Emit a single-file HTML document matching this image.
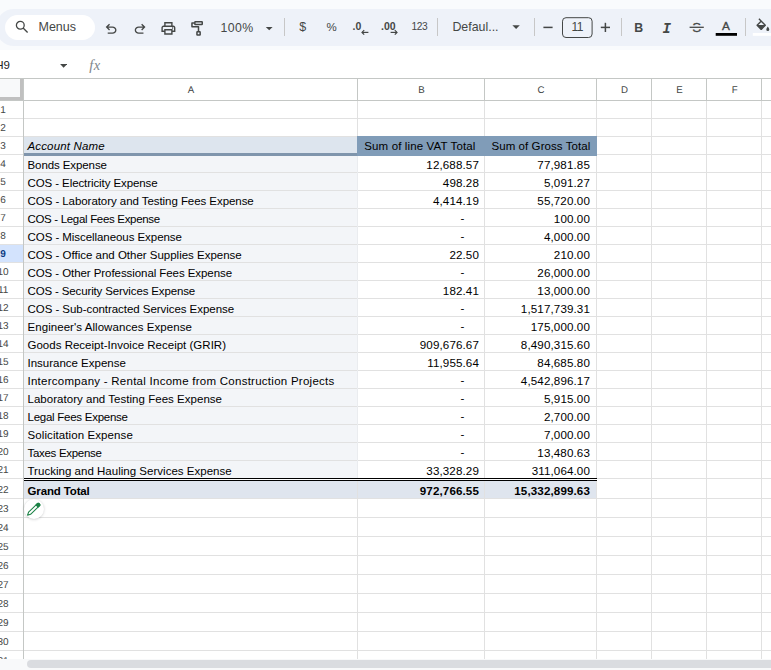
<!DOCTYPE html>
<html lang="en"><head><meta charset="utf-8"><title>Sheet</title>
<style>
html,body{margin:0;padding:0}
body{width:771px;height:670px;overflow:hidden;position:relative;background:#fff;font-family:"Liberation Sans",sans-serif;color:#000}
.abs,.abs *{position:absolute}
#page{position:absolute;left:0;top:0;width:771px;height:670px;overflow:hidden}
#page div,#page span,#page svg{position:absolute}
.hl{left:0;width:771px;height:1px;background:#e1e1e1}
.vl{top:101px;width:1px;height:558px;background:#e1e1e1}
.rh{left:-17.4px;width:41px;text-align:center;font-size:10px;margin-top:1.1px;text-rendering:geometricPrecision;color:#444746;line-height:12px;height:12px}
.ch{top:85.2px;margin-left:0.6px;height:12px;line-height:12px;font-size:9.7px;text-rendering:geometricPrecision;color:#444746;text-align:center}
.ca{left:27.5px;font-size:11.5px;letter-spacing:-0.08px;line-height:14px;height:14px;white-space:nowrap;color:#000}
.nb{font-size:11.6px;letter-spacing:0.12px;line-height:14px;height:14px;white-space:nowrap;text-align:right;color:#000}
.tb{font-size:12.5px;color:#444746;line-height:16px;height:16px;white-space:nowrap}
.sep{top:18px;width:1px;height:18px;background:#c7c7c7}
</style></head><body><div id="page">

<div style="left:0;top:0;width:771px;height:50px;background:#f9fbfd"></div>
<div style="left:-4px;top:9px;width:800px;height:37px;background:#eef2f9;border-radius:18px"></div>
<div style="left:5px;top:15px;width:90px;height:25px;background:#fff;border-radius:12.5px"></div>
<div style="left:0;top:50px;width:771px;height:28px;background:#fff"></div>
<svg style="left:13px;top:19px" width="18" height="18" viewBox="0 0 18 18"><circle cx="7.3" cy="6.3" r="3.9" fill="none" stroke="#444746" stroke-width="1.3"/><path d="M10.1 9.1 L14.6 13.6" stroke="#444746" stroke-width="1.4" stroke-linecap="butt"/></svg>
<div class="tb" style="left:38.5px;top:19px">Menus</div>
<svg style="left:102.7px;top:20.5px" width="16.2" height="16.2" viewBox="0 -960 960 960"><path fill="#444746" d="M280-200v-80h284q63 0 109.500-40T720-420q0-60-46.500-100T564-560H312l104 104-56 56-200-200 200-200 56 56-104 104h252q97 0 166.500 63T800-420q0 94-69.500 157T564-200H280Z"/></svg>
<svg style="left:132.1px;top:20.5px" width="16.2" height="16.2" viewBox="0 -960 960 960"><path fill="#444746" d="M396-200q-97 0-166.500-63T160-420q0-94 69.500-157T396-640h252L544-744l56-56 200 200-200 200-56-56 104-104H396q-63 0-109.500 40T240-420q0 60 46.500 100T396-280h284v80H396Z"/></svg>
<svg style="left:160.0px;top:19.8px" width="16.8" height="16.8" viewBox="0 -960 960 960"><path fill="#444746" d="M640-640v-120H320v120h-80v-200h480v200h-80Zm-480 80h640-640Zm560 100q17 0 28.500-11.500T760-500q0-17-11.500-28.500T720-540q-17 0-28.500 11.500T680-500q0 17 11.500 28.500T720-460Zm-80 260v-160H320v160h320Zm80 80H240v-160H80v-240q0-51 35-85.500t85-34.500h560q51 0 85.500 34.500T880-520v240H720v160Zm80-240v-160q0-17-11.500-28.500T760-560H200q-17 0-28.500 11.500T160-520v160h80v-80h480v80h80Z"/></svg>
<svg style="left:0;top:0" width="771" height="50" viewBox="0 0 771 50"><g fill="none" stroke="#444746" stroke-width="1.5" stroke-linejoin="round"><rect x="194.85" y="21.75" width="7.4" height="2.7" rx="0.5"/><path d="M194.85 23.1 H191.95 V26.75 H198.5 V31.6"/><rect x="196.95" y="31.85" width="3.2" height="3.2" rx="0.4"/></g><path d="M265.8 26.9 H272.6 L269.2 30.3 Z" fill="#444746"/><path d="M512.4 25.3 H519.8 L516.1 29 Z" fill="#444746"/><g fill="none" stroke="#444746" stroke-width="1.2"><path d="M368.4 32.4 H362"/><path d="M364.2 30.2 L362 32.4 L364.2 34.6"/><path d="M390.6 32.4 H397"/><path d="M394.8 30.2 L397 32.4 L394.8 34.6"/></g><g fill="none" stroke="#444746" stroke-width="1.5"><path d="M543.4 27.4 H552.6"/><path d="M600.8 27.4 H610"/><path d="M605.4 22.8 V32"/></g><rect x="562.5" y="17.7" width="29.6" height="19.8" rx="3.5" fill="none" stroke="#444746" stroke-width="1"/><rect x="715.7" y="33" width="21.3" height="2.8" fill="#000"/><rect x="752.8" y="33" width="20" height="2.8" fill="#fff"/><g fill="none" stroke="#444746" stroke-width="1.35" stroke-linejoin="round"><path d="M758.9 18.8 L765.3 25.3 L761.2 29.4 L757.1 25.3 L761.1 21.3"/></g><path d="M757 25.1 H765.4 L761.2 29.4 Z" fill="#444746"/><path d="M767.8 26.6 q1.5 2 1.5 2.9 a1.5 1.5 0 0 1 -3 0 q0 -0.9 1.5 -2.9Z" fill="#444746"/></svg>
<div class="sep" style="left:284px"></div>
<div class="sep" style="left:437px"></div>
<div class="sep" style="left:533.5px"></div>
<div class="sep" style="left:621px"></div>
<div class="sep" style="left:745px"></div>
<div class="tb" style="left:220.5px;top:19.5px;font-size:12.3px;letter-spacing:0.4px">100%</div>
<div class="tb" style="left:299.3px;top:19px;font-size:12.5px">$</div>
<div class="tb" style="left:326.5px;top:19px;font-size:11.5px">%</div>
<div class="tb" style="left:352.5px;top:17.5px;font-size:10.5px;font-weight:bold">.0</div>
<div class="tb" style="left:381px;top:17.5px;font-size:10.5px;font-weight:bold">.00</div>
<div class="tb" style="left:411.4px;top:19.2px;font-size:10.2px;letter-spacing:-0.3px">123</div>
<div class="tb" style="left:452.4px;top:18.8px;font-size:12.4px">Defaul...</div>
<div class="tb" style="left:562.5px;width:29.6px;text-align:center;top:19.4px;font-size:12px;letter-spacing:-0.4px">11</div>
<div class="tb" style="left:634.2px;top:20.2px;font-size:12.3px;font-weight:bold">B</div>
<div class="tb" style="left:662.6px;top:20.6px;font-size:14px;font-weight:bold;font-style:italic;font-family:'Liberation Mono',monospace">I</div>
<div class="tb" style="left:692.2px;top:19.6px;font-size:13.4px;-webkit-text-stroke:0.3px #444746">S</div>
<svg style="left:686px;top:20px" width="22" height="14" viewBox="686 20 22 14"><rect x="689" y="25.3" width="15.4" height="3.9" fill="#eef2f9"/><path d="M689.6 27.3 H703.8" stroke="#444746" stroke-width="1.3"/></svg>
<div class="tb" style="left:722.1px;top:17.9px;font-size:11.8px;-webkit-text-stroke:0.35px #444746">A</div>
<div style="left:-4.8px;top:58px;font-size:11.5px;line-height:14px;color:#202124;white-space:nowrap">H9</div>
<svg style="left:60.3px;top:63.6px" width="7.2" height="4" viewBox="0 0 7.2 4"><path d="M0.1 0.1 H7.1 L3.6 3.7 Z" fill="#444746"/></svg>
<div style="left:89.3px;top:56.3px;font-size:14.5px;line-height:18px;font-style:italic;font-family:'Liberation Serif',serif;color:#80868b;white-space:nowrap;letter-spacing:0.4px">fx</div>
<div style="left:24px;top:137px;width:333px;height:16px;background:#dde5ee"></div>
<div style="left:357px;top:136px;width:240px;height:20px;background:#809cb8"></div>
<div style="left:24px;top:155px;width:333px;height:323px;background:#f3f5f8"></div>
<div style="left:24px;top:481px;width:573px;height:17px;background:#dfe5ee"></div>
<div style="left:0;top:245px;width:23px;height:17px;background:#d3e3fd"></div>
<div class="hl" style="top:118px"></div>
<div class="hl" style="top:136px"></div>
<div class="hl" style="top:154px"></div>
<div class="hl" style="top:172px"></div>
<div class="hl" style="top:190px"></div>
<div class="hl" style="top:208px"></div>
<div class="hl" style="top:226px"></div>
<div class="hl" style="top:244px"></div>
<div class="hl" style="top:262px"></div>
<div class="hl" style="top:280px"></div>
<div class="hl" style="top:298px"></div>
<div class="hl" style="top:316px"></div>
<div class="hl" style="top:334px"></div>
<div class="hl" style="top:352px"></div>
<div class="hl" style="top:370px"></div>
<div class="hl" style="top:388px"></div>
<div class="hl" style="top:406px"></div>
<div class="hl" style="top:424px"></div>
<div class="hl" style="top:442px"></div>
<div class="hl" style="top:460px"></div>
<div class="hl" style="top:478px"></div>
<div class="hl" style="top:498px"></div>
<div class="hl" style="top:517px"></div>
<div class="hl" style="top:536px"></div>
<div class="hl" style="top:555px"></div>
<div class="hl" style="top:574px"></div>
<div class="hl" style="top:593px"></div>
<div class="hl" style="top:612px"></div>
<div class="hl" style="top:631px"></div>
<div class="hl" style="top:650px"></div>
<div class="vl" style="left:23px"></div>
<div class="vl" style="left:357px"></div>
<div class="vl" style="left:484px"></div>
<div class="vl" style="left:596px"></div>
<div class="vl" style="left:651px"></div>
<div class="vl" style="left:706px"></div>
<div class="vl" style="left:761px"></div>
<div style="left:357px;top:136px;width:240px;height:20px;background:#809cb8"></div>
<div style="left:357px;top:156px;width:1px;height:322px;background:#eaecef"></div>
<div style="left:0;top:78px;width:771px;height:1px;background:#c4c7c5"></div>
<div style="left:0;top:100px;width:771px;height:1px;background:#c4c7c5"></div>
<div style="left:23px;top:79px;width:1px;height:21px;background:#c4c7c5"></div>
<div style="left:357px;top:79px;width:1px;height:21px;background:#c4c7c5"></div>
<div style="left:484px;top:79px;width:1px;height:21px;background:#c4c7c5"></div>
<div style="left:596px;top:79px;width:1px;height:21px;background:#c4c7c5"></div>
<div style="left:651px;top:79px;width:1px;height:21px;background:#c4c7c5"></div>
<div style="left:706px;top:79px;width:1px;height:21px;background:#c4c7c5"></div>
<div style="left:761px;top:79px;width:1px;height:21px;background:#c4c7c5"></div>
<div style="left:23px;top:101px;width:1px;height:558px;background:#c4c7c5"></div>
<div style="left:0;top:79px;width:20px;height:18px;background:#f8f9fa"></div>
<div style="left:20px;top:79px;width:3px;height:21px;background:#c0c0c0"></div>
<div style="left:0;top:97px;width:23px;height:3px;background:#c0c0c0"></div>
<div class="ch" style="left:24px;width:333px">A</div>
<div class="ch" style="left:358px;width:126px">B</div>
<div class="ch" style="left:485px;width:111px">C</div>
<div class="ch" style="left:597px;width:54px">D</div>
<div class="ch" style="left:652px;width:54px">E</div>
<div class="ch" style="left:707px;width:54px">F</div>
<div class="rh" style="top:104px">1</div>
<div class="rh" style="top:122px">2</div>
<div class="rh" style="top:140px">3</div>
<div class="rh" style="top:158px">4</div>
<div class="rh" style="top:176px">5</div>
<div class="rh" style="top:194px">6</div>
<div class="rh" style="top:212px">7</div>
<div class="rh" style="top:230px">8</div>
<div class="rh" style="top:248px;font-weight:bold;color:#0b3a82">9</div>
<div class="rh" style="top:266px">10</div>
<div class="rh" style="top:284px">11</div>
<div class="rh" style="top:302px">12</div>
<div class="rh" style="top:320px">13</div>
<div class="rh" style="top:338px">14</div>
<div class="rh" style="top:356px">15</div>
<div class="rh" style="top:374px">16</div>
<div class="rh" style="top:392px">17</div>
<div class="rh" style="top:410px">18</div>
<div class="rh" style="top:428px">19</div>
<div class="rh" style="top:446px">20</div>
<div class="rh" style="top:464px">21</div>
<div class="rh" style="top:484px">22</div>
<div class="rh" style="top:503px">23</div>
<div class="rh" style="top:522px">24</div>
<div class="rh" style="top:541px">25</div>
<div class="rh" style="top:560px">26</div>
<div class="rh" style="top:579px">27</div>
<div class="rh" style="top:598px">28</div>
<div class="rh" style="top:617px">29</div>
<div class="rh" style="top:636px">30</div>
<div class="rh" style="top:655px">31</div>
<div style="left:24px;top:153px;width:333px;height:3px;background:#7f95ac"></div>
<div class="ca" style="top:139px;font-style:italic;letter-spacing:0.15px">Account Name</div>
<div class="nb" style="left:364.3px;top:139px;text-align:left;font-size:11.5px;letter-spacing:0.13px">Sum of line VAT Total</div>
<div class="nb" style="left:491.5px;top:139px;text-align:left;font-size:11.5px;letter-spacing:0.07px">Sum of Gross Total</div>
<div class="ca" style="top:158px;letter-spacing:-0.09px">Bonds Expense</div>
<div class="nb" style="left:378px;width:101px;top:158px">12,688.57</div>
<div class="nb" style="left:490px;width:100px;top:158px">77,981.85</div>
<div class="ca" style="top:176px;letter-spacing:-0.09px">COS - Electricity Expense</div>
<div class="nb" style="left:378px;width:101px;top:176px">498.28</div>
<div class="nb" style="left:490px;width:100px;top:176px">5,091.27</div>
<div class="ca" style="top:194px;letter-spacing:-0.06px">COS - Laboratory and Testing Fees Expense</div>
<div class="nb" style="left:378px;width:101px;top:194px">4,414.19</div>
<div class="nb" style="left:490px;width:100px;top:194px">55,720.00</div>
<div class="ca" style="top:212px;letter-spacing:-0.32px">COS - Legal Fees Expense</div>
<div class="nb" style="left:452.5px;width:20px;top:211.3px;text-align:center">-</div>
<div class="nb" style="left:490px;width:100px;top:212px">100.00</div>
<div class="ca" style="top:230px;letter-spacing:-0.06px">COS - Miscellaneous Expense</div>
<div class="nb" style="left:452.5px;width:20px;top:229.3px;text-align:center">-</div>
<div class="nb" style="left:490px;width:100px;top:230px">4,000.00</div>
<div class="ca" style="top:248px;letter-spacing:-0.01px">COS - Office and Other Supplies Expense</div>
<div class="nb" style="left:378px;width:101px;top:248px">22.50</div>
<div class="nb" style="left:490px;width:100px;top:248px">210.00</div>
<div class="ca" style="top:266px;letter-spacing:-0.07px">COS - Other Professional Fees Expense</div>
<div class="nb" style="left:452.5px;width:20px;top:265.3px;text-align:center">-</div>
<div class="nb" style="left:490px;width:100px;top:266px">26,000.00</div>
<div class="ca" style="top:284px;letter-spacing:-0.14px">COS - Security Services Expense</div>
<div class="nb" style="left:378px;width:101px;top:284px">182.41</div>
<div class="nb" style="left:490px;width:100px;top:284px">13,000.00</div>
<div class="ca" style="top:302px;letter-spacing:-0.05px">COS - Sub-contracted Services Expense</div>
<div class="nb" style="left:452.5px;width:20px;top:301.3px;text-align:center">-</div>
<div class="nb" style="left:490px;width:100px;top:302px">1,517,739.31</div>
<div class="ca" style="top:320px;letter-spacing:0.06px">Engineer&#39;s Allowances Expense</div>
<div class="nb" style="left:452.5px;width:20px;top:319.3px;text-align:center">-</div>
<div class="nb" style="left:490px;width:100px;top:320px">175,000.00</div>
<div class="ca" style="top:338px;letter-spacing:0.01px">Goods Receipt-Invoice Receipt (GRIR)</div>
<div class="nb" style="left:378px;width:101px;top:338px">909,676.67</div>
<div class="nb" style="left:490px;width:100px;top:338px">8,490,315.60</div>
<div class="ca" style="top:356px;letter-spacing:-0.01px">Insurance Expense</div>
<div class="nb" style="left:378px;width:101px;top:356px">11,955.64</div>
<div class="nb" style="left:490px;width:100px;top:356px">84,685.80</div>
<div class="ca" style="top:374px;letter-spacing:0.26px">Intercompany - Rental Income from Construction Projects</div>
<div class="nb" style="left:452.5px;width:20px;top:373.3px;text-align:center">-</div>
<div class="nb" style="left:490px;width:100px;top:374px">4,542,896.17</div>
<div class="ca" style="top:392px;letter-spacing:0.03px">Laboratory and Testing Fees Expense</div>
<div class="nb" style="left:452.5px;width:20px;top:391.3px;text-align:center">-</div>
<div class="nb" style="left:490px;width:100px;top:392px">5,915.00</div>
<div class="ca" style="top:410px;letter-spacing:-0.26px">Legal Fees Expense</div>
<div class="nb" style="left:452.5px;width:20px;top:409.3px;text-align:center">-</div>
<div class="nb" style="left:490px;width:100px;top:410px">2,700.00</div>
<div class="ca" style="top:428px;letter-spacing:0.09px">Solicitation Expense</div>
<div class="nb" style="left:452.5px;width:20px;top:427.3px;text-align:center">-</div>
<div class="nb" style="left:490px;width:100px;top:428px">7,000.00</div>
<div class="ca" style="top:446px;letter-spacing:-0.3px">Taxes Expense</div>
<div class="nb" style="left:452.5px;width:20px;top:445.3px;text-align:center">-</div>
<div class="nb" style="left:490px;width:100px;top:446px">13,480.63</div>
<div class="ca" style="top:464px;letter-spacing:0.02px">Trucking and Hauling Services Expense</div>
<div class="nb" style="left:378px;width:101px;top:464px">33,328.29</div>
<div class="nb" style="left:490px;width:100px;top:464px">311,064.00</div>
<div style="left:24px;top:478px;width:573px;height:1px;background:#000"></div>
<div style="left:24px;top:479px;width:573px;height:1px;background:#fff"></div>
<div style="left:24px;top:480px;width:573px;height:1px;background:#000"></div>
<div class="ca" style="top:484.4px;font-weight:bold;letter-spacing:-0.14px">Grand Total</div>
<div class="nb" style="left:378px;width:101px;top:484.4px;font-weight:bold">972,766.55</div>
<div class="nb" style="left:490px;width:100px;top:484.4px;font-weight:bold">15,332,899.63</div>
<div style="left:24.2px;top:499.2px;width:19.4px;height:19.4px;border-radius:10px;background:#fff;box-shadow:0 0.5px 2.5px rgba(60,64,67,.28)"></div>
<svg style="left:20px;top:496px" width="28" height="28" viewBox="20 496 28 28"><g transform="translate(33.45 509.5) rotate(-44)"><path d="M-5.4 -1.45 L7.2 -1.45 A0.9 0.9 0 0 1 8.1 -0.55 L8.1 0.55 A0.9 0.9 0 0 1 7.2 1.45 L-5.4 1.45 L-8.2 0 Z" fill="#fff" stroke="#1b8246" stroke-width="1.05" stroke-linejoin="round"/><path d="M5 -1.45 H7.2 A0.9 0.9 0 0 1 8.1 -0.55 V0.55 A0.9 0.9 0 0 1 7.2 1.45 H5 Z" fill="#1b8246" stroke="#1b8246" stroke-width="1.05" stroke-linejoin="round"/></g></svg>
<div style="left:0;top:659px;width:771px;height:11px;background:#f8f9fa"></div>
<div style="left:27px;top:660px;width:800px;height:8px;background:#dadce0;border-radius:4px"></div>
</div></body></html>
